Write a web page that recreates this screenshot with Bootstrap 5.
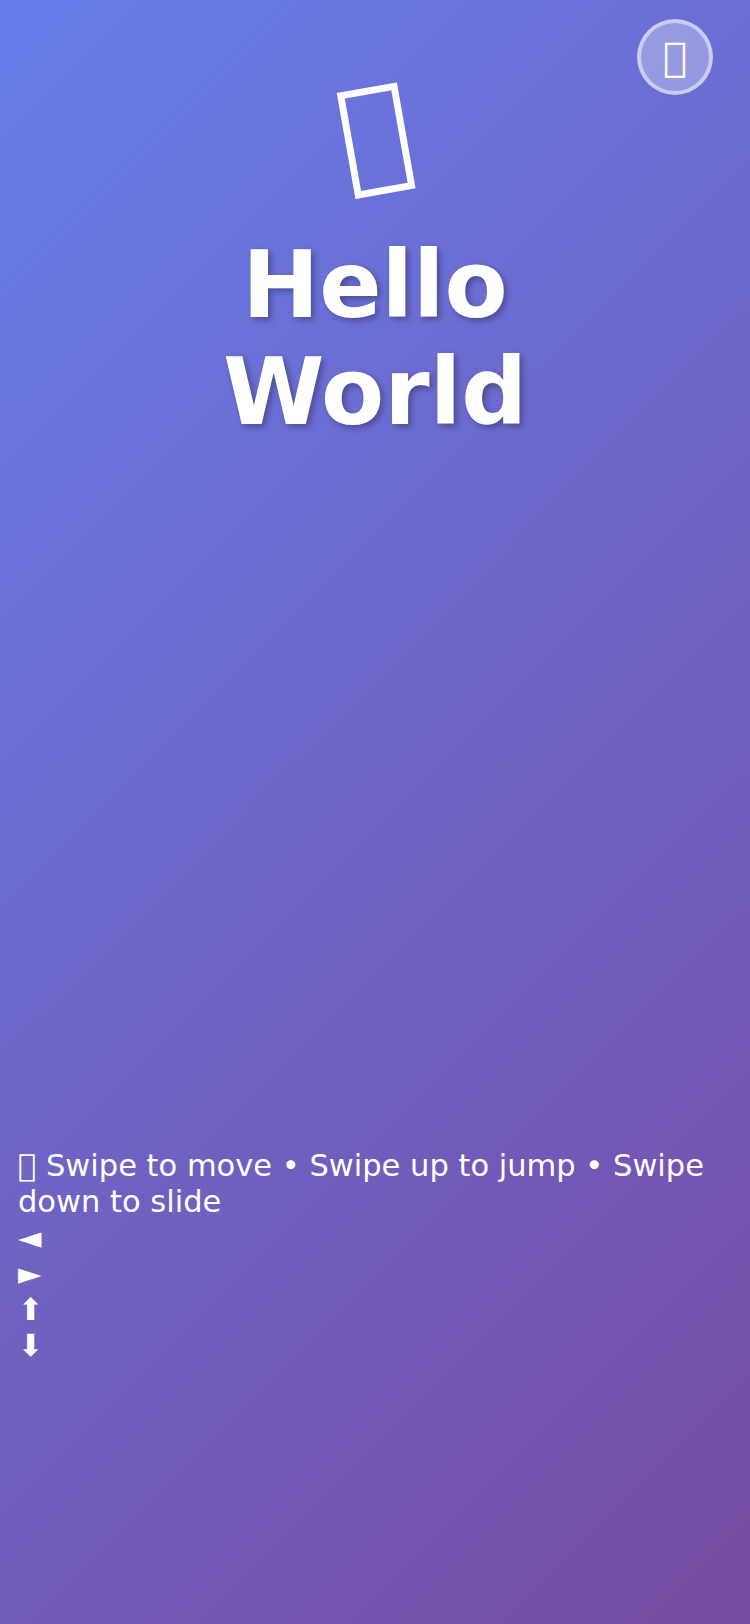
<!DOCTYPE html>
<html lang="en">
<head>
  <meta charset="UTF-8" />
  <meta name="viewport" content="width=device-width, initial-scale=1" />
  <title>Hello World</title>
  <link href="https://cdn.jsdelivr.net/npm/bootstrap@5.3.0/dist/css/bootstrap.min.css" rel="stylesheet" />
  <style>
    body {
      background: linear-gradient(135deg, #667eea 0%, #764ba2 100%);
      min-height: 100vh;
      color: #fff;
      font-family: "DejaVu Sans", sans-serif;
    }
    .sound-btn {
      top: 19px;
      right: 37px;
      width: 76px;
      height: 76px;
      font-size: 40px;
      line-height: 1;
      background: rgba(255, 255, 255, 0.3);
      border: 4px solid rgba(255, 255, 255, 0.5);
    }
    .hero-emoji {
      font-size: 122px;
      line-height: 140px;
      transform: rotate(-10deg);
      margin-top: 61px;
    }
    .hero-title {
      font-size: 92px;
      font-weight: 700;
      line-height: 107px;
      text-shadow: 3px 3px 6px rgba(0, 0, 0, 0.3);
      margin-top: 31px;
    }
    .hint-box {
      font-size: 30.5px;
      line-height: 36px;
      margin-top: 702px;
      padding: 0 18px;
    }
  </style>
</head>
<body>

  <button class="sound-btn btn position-absolute rounded-circle p-0 text-white d-flex align-items-center justify-content-center">&#xE000;</button>

  <div class="d-flex flex-column align-items-center text-center">
    <div class="hero-emoji">&#xE000;</div>
    <h1 class="hero-title mb-0">Hello<br />World</h1>
  </div>

  <div class="hint-box">
    <div>&#xE000; Swipe to move &bull; Swipe up to jump &bull; Swipe down to slide</div>
    <div>&#x25C4;</div>
    <div>&#x25BA;</div>
    <div>&#x2B06;</div>
    <div>&#x2B07;</div>
  </div>

</body>
</html>
